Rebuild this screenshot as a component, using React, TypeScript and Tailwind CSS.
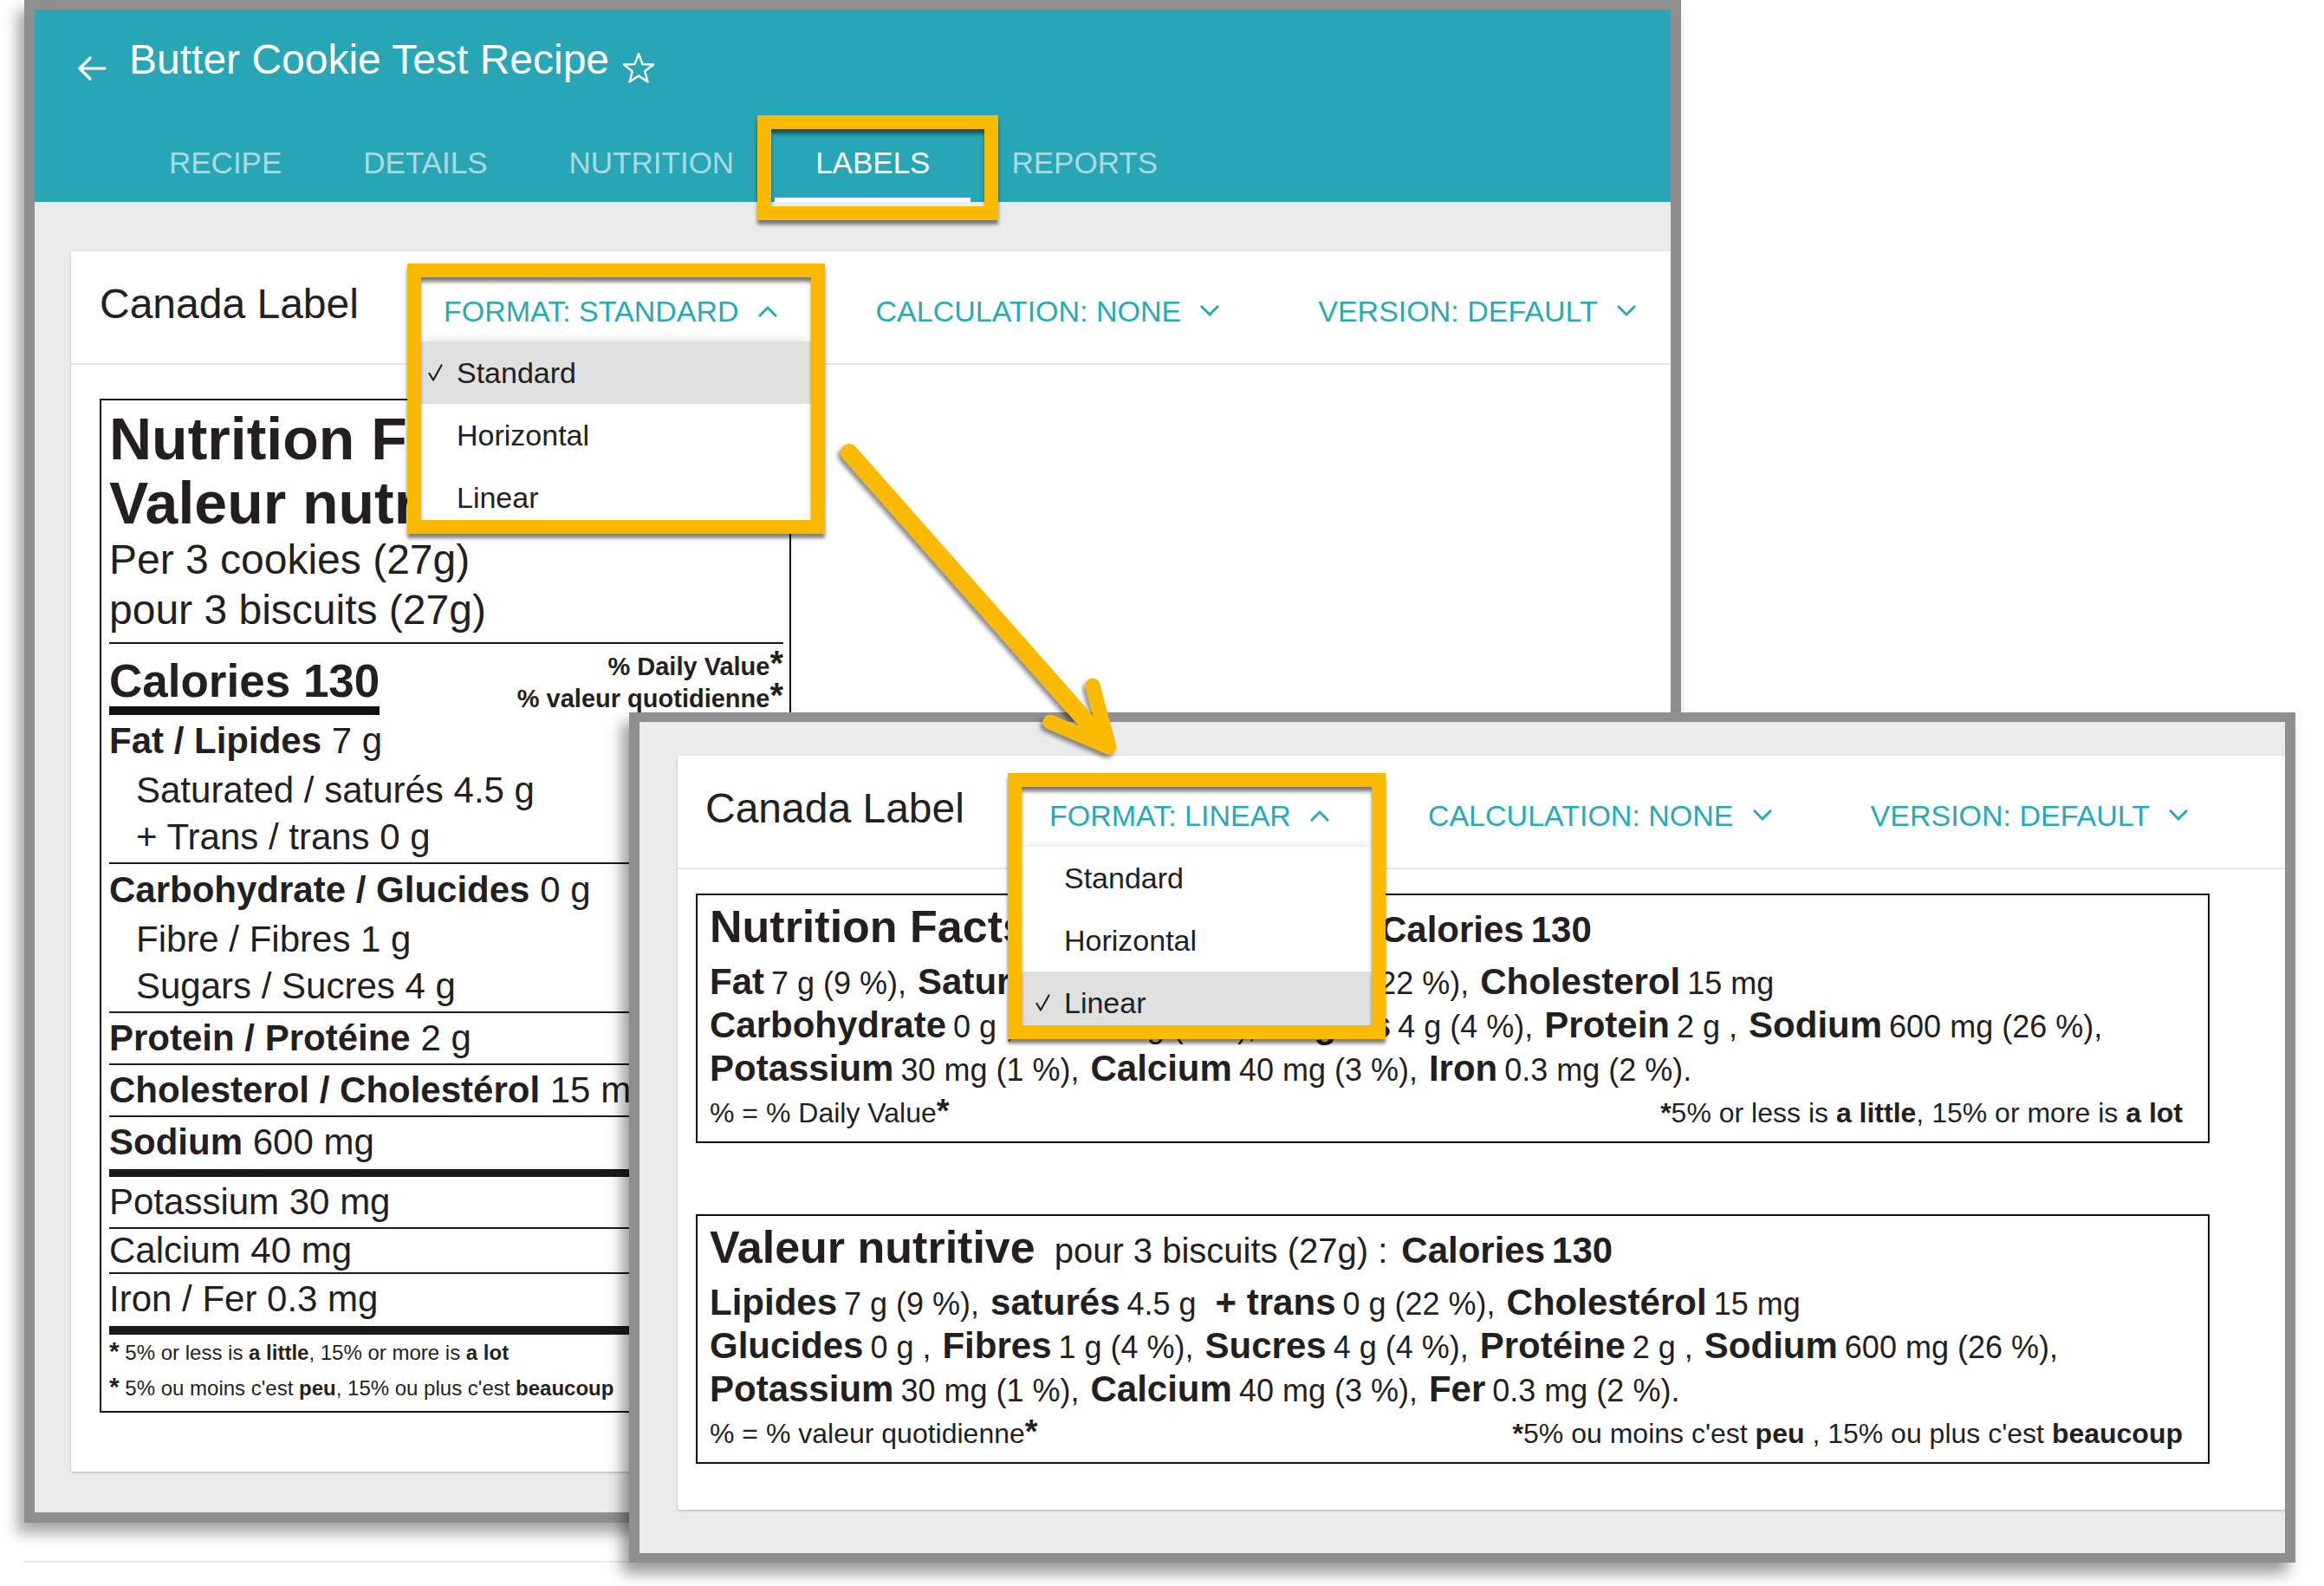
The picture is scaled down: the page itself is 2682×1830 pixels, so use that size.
import React from "react";

/* ---------- small drawings ---------- */

function BackArrow() {
  return (
    <svg width="34" height="30" viewBox="0 0 34 30" fill="none" stroke="white" strokeWidth="3.2" strokeLinecap="round" strokeLinejoin="round">
      <path d="M32 15H3M15 3L3 15l12 12" />
    </svg>
  );
}

function StarOutline() {
  return (
    <svg width="40" height="37" viewBox="0 0 40 37" fill="none" stroke="white" strokeWidth="2.4" strokeLinejoin="round">
      <polygon points="20,2 24.41,13.93 37.12,14.44 27.13,22.32 30.58,34.56 20,27.5 9.42,34.56 12.87,22.32 2.88,14.44 15.59,13.93" />
    </svg>
  );
}

function Chevron({ up }: { up?: boolean }) {
  return (
    <svg width="22" height="14" viewBox="0 0 22 14" fill="none" stroke="#27a9b7" strokeWidth="3" strokeLinecap="square">
      <polyline points={up ? "2,12 11,3 20,12" : "2,2 11,11 20,2"} />
    </svg>
  );
}

function CheckMark() {
  return (
    <svg width="17" height="20" viewBox="0 0 17 20" fill="none" stroke="#212121" strokeWidth="2.2" strokeLinecap="round" strokeLinejoin="round">
      <polyline points="1.5,11 6,18.5 15.5,1.5" />
    </svg>
  );
}

/* ---------- header pieces ---------- */

function Tab({ label, active }: { label: string; active?: boolean }) {
  return (
    <div className={`relative flex items-center px-[47px] text-[35px] leading-none ${active ? "text-white" : "text-white/60"}`}>
      {label}
      {active && <div className="absolute inset-x-0 bottom-0 h-[5px] bg-white" />}
    </div>
  );
}

function ToolbarButton({ label, open }: { label: string; open?: boolean }) {
  return (
    <div className="flex items-center gap-[22px] whitespace-nowrap px-[57px] text-[34px] leading-none text-[#27a9b7]">
      <span>{label}</span>
      <Chevron up={open} />
    </div>
  );
}

function CardHeader({ format, padClass }: { format: string; padClass: string }) {
  return (
    <div className={`flex h-[131px] items-center border-b-2 border-[#e6e6e6] ${padClass}`}>
      <span className="mb-[8px] whitespace-nowrap text-[48px] leading-none text-[#212121]">Canada Label</span>
      <div className="ml-[41px] mt-[8px] flex">
        <ToolbarButton label={format} open />
        <ToolbarButton label="CALCULATION: NONE" />
        <ToolbarButton label="VERSION: DEFAULT" />
      </div>
    </div>
  );
}

function MenuRow({ label, checked, padClass }: { label: string; checked?: boolean; padClass: string }) {
  return (
    <div className={`flex h-[72px] items-center text-[34px] leading-none text-[#212121] ${padClass} ${checked ? "bg-[#e0e0e0]" : "bg-white"}`}>
      <span className="flex w-[33px]">{checked && <CheckMark />}</span>
      <span>{label}</span>
    </div>
  );
}

/* ---------- standard (vertical) label ---------- */

function Rule({ className }: { className: string }) {
  return <div className={`bg-[#1a1a1a] ${className}`} />;
}

function BigStar() {
  return <span className="text-[40px] leading-[0]">*</span>;
}

function StandardLabel() {
  return (
    <div className="ml-[33px] mt-[39px] w-[798px] whitespace-nowrap border-2 border-[#111] pb-[6px] pl-[9px] pr-[7px] pt-[7px] text-[#231f20]">
      <div className="text-[68px] font-bold leading-[74px]">
        <div>Nutrition Facts</div>
        <div>Valeur nutritive</div>
      </div>
      <div className="text-[48px] leading-[58px]">
        <div>Per 3 cookies (27g)</div>
        <div>pour 3 biscuits (27g)</div>
      </div>
      <Rule className="mt-[8px] h-[2px]" />
      <div className="flex items-start justify-between">
        <div className="mt-[14px] w-fit">
          <div className="text-[53px] font-bold leading-[58px]">Calories 130</div>
          <div className="h-[10px] bg-[#111]" />
        </div>
        <div className="mt-[8px] text-right text-[29px] font-bold leading-[37px]">
          <div>
            % Daily Value<BigStar />
          </div>
          <div>
            % valeur quotidienne<BigStar />
          </div>
        </div>
      </div>

      <div className="text-[42px]">
        <div className="leading-[60px]">
          <b>Fat / Lipides</b> 7 g
        </div>
        <div className="pl-[31px] leading-[54px]">Saturated / saturés 4.5 g</div>
        <div className="pl-[31px] leading-[54px]">+ Trans / trans 0 g</div>
      </div>
      <Rule className="mt-[2px] h-[2px]" />
      <div className="text-[42px]">
        <div className="leading-[60px]">
          <b>Carbohydrate / Glucides</b> 0 g
        </div>
        <div className="pl-[31px] leading-[54px]">Fibre / Fibres 1 g</div>
        <div className="pl-[31px] leading-[54px]">Sugars / Sucres 4 g</div>
      </div>
      <Rule className="mt-[2px] h-[2px]" />
      <div className="text-[42px] leading-[58px]">
        <b>Protein / Protéine</b> 2 g
      </div>
      <Rule className="h-[2px]" />
      <div className="text-[42px] leading-[58px]">
        <b>Cholesterol / Cholestérol</b> 15 mg
      </div>
      <Rule className="h-[2px]" />
      <div className="text-[42px] leading-[58px]">
        <b>Sodium</b> 600 mg
      </div>
      <Rule className="mt-[2px] h-[9px]" />
      <div className="text-[42px] leading-[58px]">Potassium 30 mg</div>
      <Rule className="h-[2px]" />
      <div className="text-[42px] leading-[50px]">Calcium 40 mg</div>
      <Rule className="h-[2px]" />
      <div className="text-[42px] leading-[58px]">Iron / Fer 0.3 mg</div>
      <Rule className="mt-[2px] h-[10px]" />
      <div className="text-[24px] leading-[41px]">
        <div>
          <span className="text-[30px] font-bold leading-[0]">*</span> 5% or less is <b>a little</b>, 15% or more is <b>a lot</b>
        </div>
        <div>
          <span className="text-[30px] font-bold leading-[0]">*</span> 5% ou moins c'est <b>peu</b>, 15% ou plus c'est <b>beaucoup</b>
        </div>
      </div>
    </div>
  );
}

/* ---------- linear labels ---------- */

type Nutrient = { name: string; value: string; wide?: boolean };

function Entry({ name, value, first, wide }: Nutrient & { first?: boolean }) {
  const gap = first ? "" : wide ? "ml-[22px]" : "ml-[13px]";
  return (
    <span className={gap}>
      <b>{name}</b>
      <span className="ml-[8px] text-[36px] leading-none">{value}</span>
    </span>
  );
}

function LinearLabel({
  title,
  serving,
  lines,
  legend,
  note,
  className,
}: {
  title: string;
  serving: string;
  lines: Nutrient[][];
  legend: string;
  note: React.ReactNode;
  className: string;
}) {
  return (
    <div className={`ml-[21px] w-[1747px] whitespace-nowrap border-2 border-[#111] pb-[7px] pl-[14px] pt-[6px] text-[#231f20] ${className}`}>
      <div className="text-[52px] font-bold leading-[60px]">
        {title}
        <span className="ml-[22px] text-[40px] font-normal leading-none">{serving}</span>
        <span className="ml-[16px] text-[42px] leading-none">Calories</span>
        <span className="ml-[8px] text-[42px] leading-none">130</span>
      </div>
      <div className="mt-[9px] text-[42px] leading-[50px]">
        {lines.map((line, i) => (
          <div key={i}>
            {line.map((e, j) => (
              <Entry key={j} {...e} first={j === 0} />
            ))}
          </div>
        ))}
      </div>
      <div className="flex items-baseline justify-between pr-[29px] leading-[52px]">
        <span className="text-[32px]">
          {legend}
          <span className="text-[38px] font-bold leading-[0]">*</span>
        </span>
        <span className="text-[32px]">{note}</span>
      </div>
    </div>
  );
}

/* ---------- windows ---------- */

function Highlight({ className }: { className: string }) {
  return (
    <div
      className={`pointer-events-none absolute z-10 border-[16px] border-[#fbb900] shadow-[0_5px_4px_rgba(0,0,0,0.5),inset_0_6px_5px_-1px_rgba(0,0,0,0.55)] ${className}`}
    />
  );
}

function RecipeWindow() {
  return (
    <div className="absolute left-[28px] top-0 flex h-[1757px] w-[1912px] flex-col border-x-[12px] border-b-[12px] border-t-[11px] border-[#8e8e8e] bg-[#ebebeb] shadow-[-8px_12px_16px_rgba(0,0,0,0.35)]">
      <header className="flex h-[222px] shrink-0 flex-col bg-[#29a6b5]">
        <div className="flex h-[126px] items-start pl-[49px] pt-[34px]">
          <span className="mt-[19px]">
            <BackArrow />
          </span>
          <span className="ml-[26px] whitespace-nowrap text-[48px] leading-none text-white">Butter Cookie Test Recipe</span>
          <span className="ml-[14px] mt-[15px]">
            <StarOutline />
          </span>
        </div>
        <nav className="flex h-[96px] pl-[108px] pt-[4px]">
          <Tab label="RECIPE" />
          <Tab label="DETAILS" />
          <Tab label="NUTRITION" />
          <Tab label="LABELS" active />
          <Tab label="REPORTS" />
        </nav>
      </header>

      <div className="flex min-h-0 flex-1 overflow-hidden pb-[47px] pl-[42px] pt-[57px]">
        <section className="relative flex-1 rounded-[2px] bg-white shadow-[0_1px_3px_rgba(0,0,0,0.25)]">
          <CardHeader format="FORMAT: STANDARD" padClass="pl-[33px]" />
          <StandardLabel />

          <div className="absolute left-[404px] top-[104px] z-10 w-[450px] bg-white shadow-[0_-6px_10px_-4px_rgba(0,0,0,0.12)]">
            <MenuRow label="Standard" checked padClass="pl-[8px]" />
            <MenuRow label="Horizontal" padClass="pl-[8px]" />
            <MenuRow label="Linear" padClass="pl-[8px]" />
          </div>
          <Highlight className="left-[388px] top-[14px] h-[312px] w-[482px]" />
        </section>
      </div>

      <Highlight className="left-[834px] top-[122px] h-[121px] w-[278px]" />
    </div>
  );
}

function LinearWindow() {
  return (
    <div className="absolute left-[726px] top-[822px] flex h-[981px] w-[1923px] flex-col border-x-[12px] border-b-[11px] border-t-[11px] border-[#8e8e8e] bg-[#ebebeb] shadow-[-8px_12px_16px_rgba(0,0,0,0.4)]">
      <div className="flex min-h-0 flex-1 overflow-hidden pb-[50px] pl-[44px] pt-[39px]">
        <section className="relative flex-1 rounded-[2px] bg-white shadow-[0_1px_3px_rgba(0,0,0,0.25)]">
          <CardHeader format="FORMAT: LINEAR" padClass="pl-[32px]" />

          <LinearLabel
            className="mt-[28px]"
            title="Nutrition Facts"
            serving="Per 3 cookies (27g) :"
            lines={[
              [
                { name: "Fat", value: "7 g (9 %)," },
                { name: "Saturated", value: "4.5 g" },
                { name: "+ Trans", value: "0 g (22 %),", wide: true },
                { name: "Cholesterol", value: "15 mg" },
              ],
              [
                { name: "Carbohydrate", value: "0 g ," },
                { name: "Fibre", value: "1 g (4 %)," },
                { name: "Sugars", value: "4 g (4 %)," },
                { name: "Protein", value: "2 g ," },
                { name: "Sodium", value: "600 mg (26 %)," },
              ],
              [
                { name: "Potassium", value: "30 mg (1 %)," },
                { name: "Calcium", value: "40 mg (3 %)," },
                { name: "Iron", value: "0.3 mg (2 %)." },
              ],
            ]}
            legend="% = % Daily Value"
            note={
              <>
                <b>*</b>5% or less is <b>a little</b>, 15% or more is <b>a lot</b>
              </>
            }
          />

          <LinearLabel
            className="mt-[82px]"
            title="Valeur nutritive"
            serving="pour 3 biscuits (27g) :"
            lines={[
              [
                { name: "Lipides", value: "7 g (9 %)," },
                { name: "saturés", value: "4.5 g" },
                { name: "+ trans", value: "0 g (22 %),", wide: true },
                { name: "Cholestérol", value: "15 mg" },
              ],
              [
                { name: "Glucides", value: "0 g ," },
                { name: "Fibres", value: "1 g (4 %)," },
                { name: "Sucres", value: "4 g (4 %)," },
                { name: "Protéine", value: "2 g ," },
                { name: "Sodium", value: "600 mg (26 %)," },
              ],
              [
                { name: "Potassium", value: "30 mg (1 %)," },
                { name: "Calcium", value: "40 mg (3 %)," },
                { name: "Fer", value: "0.3 mg (2 %)." },
              ],
            ]}
            legend="% = % valeur quotidienne"
            note={
              <>
                <b>*</b>5% ou moins c'est <b>peu</b> , 15% ou plus c'est <b>beaucoup</b>
              </>
            }
          />

          <div className="absolute left-[397px] top-[105px] z-10 w-[404px] bg-white shadow-[0_-6px_10px_-4px_rgba(0,0,0,0.12)]">
            <MenuRow label="Standard" padClass="pl-[16px]" />
            <MenuRow label="Horizontal" padClass="pl-[16px]" />
            <MenuRow label="Linear" checked padClass="pl-[16px]" />
          </div>
          <Highlight className="left-[381px] top-[20px] h-[307px] w-[436px]" />
        </section>
      </div>
    </div>
  );
}

function PointerArrow() {
  return (
    <svg className="pointer-events-none absolute left-0 top-0" width="2682" height="1830" viewBox="0 0 2682 1830" fill="none">
      <defs>
        <filter id="arrowShade" x="-20%" y="-20%" width="140%" height="140%">
          <feDropShadow dx="-3" dy="4" stdDeviation="2.5" floodColor="#000" floodOpacity="0.45" />
        </filter>
      </defs>
      <g filter="url(#arrowShade)" stroke="#fbb900" strokeLinecap="round" strokeLinejoin="round">
        <line x1="980" y1="522" x2="1266" y2="846" strokeWidth="20" />
        <polyline points="1212,833 1280,862 1261,791" strokeWidth="17" />
      </g>
    </svg>
  );
}

export default function App() {
  return (
    <div className="relative h-[1830px] w-[2682px] overflow-hidden bg-white font-['Liberation_Sans',Arial,sans-serif]">
      <div className="absolute left-[27px] top-[1801px] h-[2px] w-[700px] bg-[#ececec]" />
      <RecipeWindow />
      <LinearWindow />
      <PointerArrow />
    </div>
  );
}
